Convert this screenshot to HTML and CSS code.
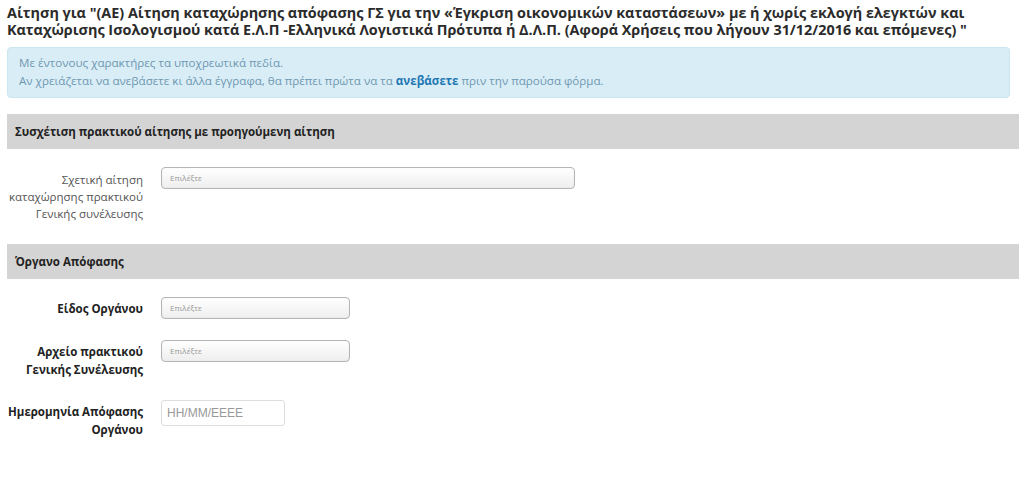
FILE: index.html
```html
<!DOCTYPE html>
<html lang="el">
<head>
<meta charset="utf-8">
<link rel="stylesheet" href="styles.css">
</head>
<body>
<div class="page">
  <h1 class="title">Αίτηση για "(ΑΕ) Αίτηση καταχώρησης απόφασης ΓΣ για την «Έγκριση οικονομικών καταστάσεων» με ή χωρίς εκλογή ελεγκτών και Καταχώρισης Ισολογισμού κατά Ε.Λ.Π -Ελληνικά Λογιστικά Πρότυπα ή Δ.Λ.Π. (Αφορά Χρήσεις που λήγουν 31/12/2016 και επόμενες) "</h1>
  <div class="alert">
    <div>Με έντονους χαρακτήρες τα υποχρεωτικά πεδία.</div>
    <div>Αν χρειάζεται να ανεβάσετε κι άλλα έγγραφα, θα πρέπει πρώτα να τα <a class="link" href="#">ανεβάσετε</a> πριν την παρούσα φόρμα.</div>
  </div>

  <div class="section-head top">Συσχέτιση πρακτικού αίτησης με προηγούμενη αίτηση</div>
  <div class="section-body first">
    <div class="row">
      <div class="label opt">Σχετική αίτηση καταχώρησης πρακτικού Γενικής συνέλευσης</div>
      <div class="field"><div class="select wide">Επιλέξτε</div></div>
    </div>
  </div>

  <div class="section-head">Όργανο Απόφασης</div>
  <div class="section-body">
    <div class="row">
      <div class="label req">Είδος Οργάνου</div>
      <div class="field"><div class="select">Επιλέξτε</div></div>
    </div>
    <div class="row">
      <div class="label req">Αρχείο πρακτικού Γενικής Συνέλευσης</div>
      <div class="field"><div class="select">Επιλέξτε</div></div>
    </div>
    <div class="row">
      <div class="label req">Ημερομηνία Απόφασης Οργάνου</div>
      <div class="field"><input class="date" type="text" placeholder="HH/MM/EEEE"></div>
    </div>
  </div>
</div>
</body>
</html>
```

FILE: styles.css
```css
* { box-sizing: border-box; }
html, body { margin: 0; padding: 0; background: #fff; }
body {
  font-family: "Open Sans", "Noto Sans", sans-serif;
  color: #333;
}
.page {
  padding: 4px 5px 0 7px;
}
.title {
  margin: 0;
  font-size: 14.4px;
  line-height: 17px;
  font-weight: 700;
  color: #2b2b2b;
  width: 1000px;
}
.alert {
  margin-top: 9px;
  width: 1003px;
  background: #d9edf7;
  border: 1px solid #c9e6f1;
  border-radius: 4px;
  padding: 6px 11px 7px 11px;
  font-size: 11.6px;
  line-height: 18px;
  color: #6f98b0;
}
.link {
  color: #1f78b4;
  font-weight: 700;
  text-decoration: none;
}
.section-head {
  background: #d4d4d4;
  height: 35px;
  padding: 0 8px;
  display: flex;
  align-items: center;
  font-size: 11.5px;
  font-weight: 700;
  color: #222;
}
.section-head.top {
  margin-top: 16px;
}
.section-body {
  padding-top: 18px;
}
.section-body.first {
  padding-bottom: 9px;
}
.row {
  display: flex;
  align-items: flex-start;
  margin-bottom: 21px;
}
.section-body.first .row {
  margin-bottom: 13px;
}
.label {
  width: 136px;
  text-align: right;
  font-size: 11.5px;
  line-height: 18px;
  padding-top: 3px;
}
.label.opt {
  color: #555;
  line-height: 17px;
  padding-top: 4px;
}
.label.req {
  font-weight: 700;
  color: #222;
}
.field {
  margin-left: 18px;
}
.select {
  width: 189px;
  height: 22px;
  border: 1px solid #b5b5b5;
  border-radius: 4px;
  background: linear-gradient(#ffffff, #eeeeee);
  box-shadow: inset 0 0 2px rgba(0,0,0,0.06);
  font-size: 8px;
  line-height: 20px;
  padding-left: 8px;
  color: #999;
}
.select.wide { width: 414px; }
.date {
  display: block;
  width: 124px;
  height: 26px;
  border: 1px solid #ddd;
  border-radius: 3px;
  font-family: "Liberation Sans", Arial, sans-serif;
  font-size: 12px;
  padding: 0 5px;
  margin: 0;
}
.date::placeholder { color: #999; }
```
